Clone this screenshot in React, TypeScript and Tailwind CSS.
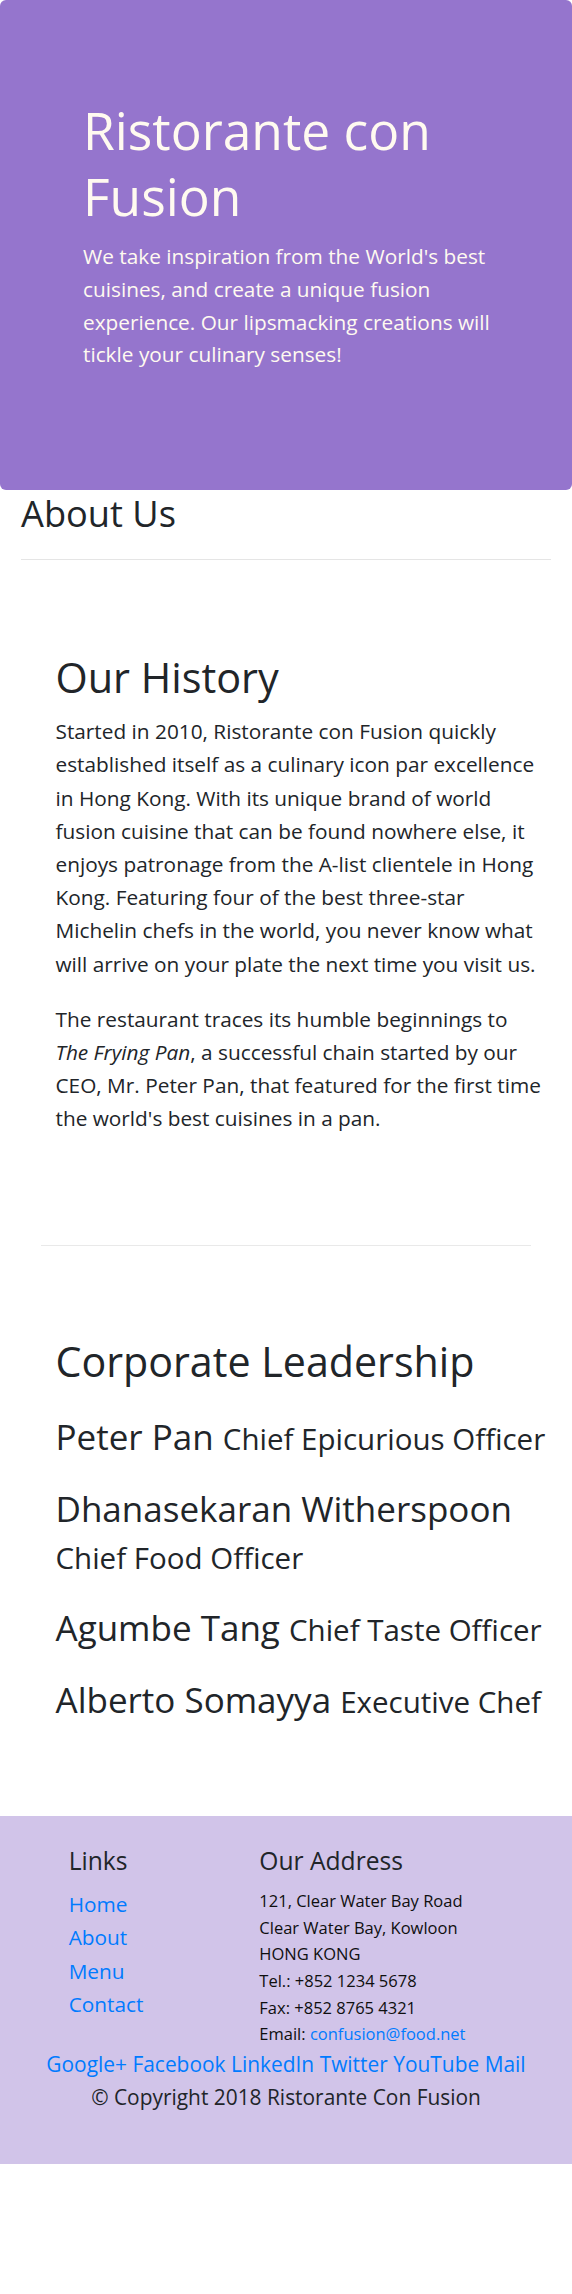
const font = '"Open Sans", "Noto Sans", sans-serif';

const leaders = [
  { name: 'Peter Pan', title: 'Chief Epicurious Officer' },
  { name: 'Dhanasekaran Witherspoon', title: 'Chief Food Officer' },
  { name: 'Agumbe Tang', title: 'Chief Taste Officer' },
  { name: 'Alberto Somayya', title: 'Executive Chef' },
];

const links = ['Home', 'About', 'Menu', 'Contact'];
const socials = ['Google+', 'Facebook', 'LinkedIn', 'Twitter', 'YouTube', 'Mail'];

export default function App() {
  return (
    <div className="w-[572px] bg-white text-[#212529]" style={{ fontFamily: font }}>
      <header className="rounded-[6px] bg-[#9575cd] pt-[97px] pb-[97px] pl-[83px] pr-[74px] text-[#fffaf0]">
        <h1 className="mb-[11px] text-[51.5px] leading-[66px]">Ristorante con Fusion</h1>
        <p className="mb-[22px] text-[20.8px] leading-[32.8px]">
          We take inspiration from the World's best cuisines, and create a unique fusion experience. Our lipsmacking
          creations will tickle your culinary senses!
        </p>
      </header>

      <main>
        <div className="px-[21px]">
          <h3 className="text-[36.2px] leading-[46.5px]">About Us</h3>
          <hr className="mt-[22.5px] border-t border-black/10" />
        </div>

        <section className="mx-[41px] border-b border-[#e9e9e9] pt-[91px] pb-[87px]">
          <div className="w-[505px] pl-[14.5px]">
            <h2 className="mb-[11px] text-[41.4px] leading-[53px]">Our History</h2>
            <p className="mb-[22px] text-[20.8px] leading-[33.2px]">
              Started in 2010, Ristorante con Fusion quickly established itself as a culinary icon par excellence in
              Hong Kong. With its unique brand of world fusion cuisine that can be found nowhere else, it enjoys
              patronage from the A-list clientele in Hong Kong. Featuring four of the best three-star Michelin chefs in
              the world, you never know what will arrive on your plate the next time you visit us.
            </p>
            <p className="mb-[22px] text-[20.8px] leading-[33.2px]">
              The restaurant traces its humble beginnings to <em className="whitespace-nowrap">The Frying Pan</em>, a
              successful chain started by our CEO, Mr. Peter Pan, that featured for the first time the world's best
              cuisines in a pan.
            </p>
          </div>
        </section>

        <section className="pl-[55.5px] pr-[15px] pt-[89px] pb-[93px]">
          <h2 className="mb-[26.7px] text-[41.2px] leading-[53px]">Corporate Leadership</h2>
          <div className="flex flex-col gap-[25.5px]">
            {leaders.map((l) => (
              <h3 key={l.name} className="text-[35px] leading-[46.5px]">
                {l.name} <small className="text-[29.5px] leading-[36px]">{l.title}</small>
              </h3>
            ))}
          </div>
        </section>
      </main>

      <footer className="bg-[#d1c4e9] pt-[27.7px] pb-[27.7px]">
        <div className="grid grid-cols-12">
          <div className="col-span-4 col-start-2 px-[21px]">
            <h5 className="mb-[11px] text-[24.6px] leading-[33.2px]">Links</h5>
            <ul className="mb-[22px] text-[20.8px] leading-[33.2px] text-[#007bff]">
              {links.map((l) => (
                <li key={l}>
                  <a href={`#${l.toLowerCase()}`}>{l}</a>
                </li>
              ))}
            </ul>
          </div>
          <div className="col-span-7 px-[21px]">
            <h5 className="mb-[11px] text-[24.6px] leading-[33.2px]">Our Address</h5>
            <address className="text-[16.5px] leading-[26.6px] not-italic text-[#0f0f0f]">
              121, Clear Water Bay Road
              <br />
              Clear Water Bay, Kowloon
              <br />
              HONG KONG
              <br />
              Tel.: +852 1234 5678
              <br />
              Fax: +852 8765 4321
              <br />
              Email:{' '}
              <a href="mailto:confusion@food.net" className="text-[#007bff]">
                confusion@food.net
              </a>
            </address>
          </div>
        </div>
        <div className="flex justify-center gap-x-[5.5px] px-[21px] text-[20.9px] leading-[33.2px] text-[#007bff]">
          {socials.map((s) => (
            <a key={s} href={`#${s.toLowerCase()}`}>
              {s}
            </a>
          ))}
        </div>
        <p className="mb-[22px] text-center text-[20.9px] leading-[33.2px]">© Copyright 2018 Ristorante Con Fusion</p>
      </footer>
    </div>
  );
}
